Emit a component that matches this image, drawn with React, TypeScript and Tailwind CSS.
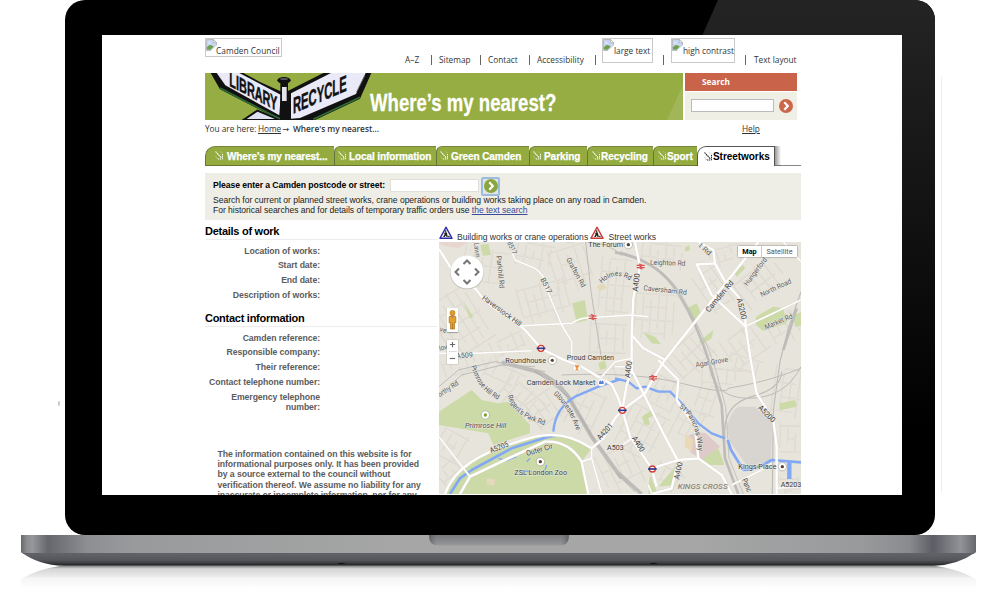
import React from "react";

function BrokenImage() {
  return (
    <svg viewBox="0 0 12 13" className="h-[12px] w-[11px] shrink-0">
      <path d="M.5.5h7.5l3.5 3.5v3.5L6 12.5H.5z" fill="#c9d6f2" stroke="#a9acb3" strokeWidth=".8" />
      <path d="M8 .5V4h3.5z" fill="#fff" stroke="#9a9ea8" strokeWidth=".7" />
      <path d="M2 4.5q1.5-2 3 0z" fill="#fff" />
      <path d="M1 11.5V9q3-3.500 5.500-2l2 1L5 11.800z" fill="#6d9f4d" />
      <path d="M12 6.500 5 13h7z" fill="#fff" />
    </svg>
  );
}

function AltImage({ label, className, textClass }: { label: string; className: string; textClass: string }) {
  return (
    <div className={`flex shrink-0 border border-[#c9c9c9] bg-white ${className}`}>
      <BrokenImage />
      <span className={textClass}>{label}</span>
    </div>
  );
}

function Divider({ className }: { className: string }) {
  return <span className={`mt-[17px] h-[10px] w-px shrink-0 bg-[#666] ${className}`} />;
}

function Header() {
  const item = "mt-[16px] shrink-0 leading-[12px]";
  return (
    <div className="flex h-[37.500px] shrink-0 whitespace-nowrap pt-[3px] font-['Open_Sans','Noto_Sans',sans-serif] text-[8.300px] text-[#333]">
      <AltImage label="Camden Council" className="h-[19px] w-[77px]" textClass="-ml-px mt-[6px] leading-[12px] tracking-[0.050px]" />
      <span className={`ml-[123px] w-[26px] ${item}`}>A–Z</span>
      <Divider className="" />
      <span className={`ml-[7px] w-[41px] ${item}`}>Sitemap</span>
      <Divider className="" />
      <span className={`ml-[7px] w-[41px] ${item}`}>Contact</span>
      <Divider className="" />
      <span className={`ml-[7px] w-[58px] tracking-[0.050px] ${item}`}>Accessibility</span>
      <Divider className="" />
      <AltImage label="large text" className="ml-[6px] h-[25px] w-[51px]" textClass="mt-[6px] leading-[12px]" />
      <Divider className="ml-[10px]" />
      <AltImage label="high contrast" className="ml-[7px] h-[25px] w-[64px]" textClass="mt-[6px] leading-[12px]" />
      <Divider className="ml-[10px]" />
      <span className={`ml-[8px] ${item}`}>Text layout</span>
    </div>
  );
}

function Signpost() {
  return (
    <svg viewBox="15 113 510 141" className="h-[47px] w-[170px] shrink-0">
      <path d="M130 254 172 226 240 254z" fill="#dfe0f2" stroke="#111" strokeWidth="6" />
      <path d="M32 113 60 162 240 254 268 254 268 180 180 140 130 113z" fill="#111" />
      <path d="M60 158 210 236 240 250" stroke="#2f6b37" strokeWidth="5" fill="none" />
      <path d="M50 113 76 150 238 240 242 178 118 113z" fill="#e9e9f8" />
      <path d="M258 254 262 168 370 113 514 113 480 190 345 254z" fill="#111" />
      <path d="M480 186 340 252" stroke="#2f6b37" strokeWidth="5" fill="none" />
      <path d="M273 174 393 113 497 113 468 176 300 248 273 250z" fill="#e9e9f8" />
      <path d="M470 170 494 122" stroke="#555" strokeWidth="3" />
      <rect x="241" y="135" width="23" height="119" fill="#111" />
      <rect x="246" y="155" width="14" height="42" fill="#e4e4ee" />
      <ellipse cx="252" cy="135" rx="20" ry="10" fill="#111" />
      <ellipse cx="252" cy="131" rx="12" ry="3" fill="#555" />
      <g fontFamily="Liberation Sans, Arial, sans-serif" fontWeight="700" fill="#111" stroke="#111" strokeWidth="1.500">
        <text transform="matrix(1 .53 0 1 88 151)" fontSize="61" textLength="144" lengthAdjust="spacingAndGlyphs">LIBRARY</text>
        <text transform="matrix(1 -.43 0 1 279 235)" fontSize="68" textLength="161" lengthAdjust="spacingAndGlyphs">RECYCLE</text>
      </g>
    </svg>
  );
}

function Chevron({ fill }: { fill: string }) {
  return (
    <svg viewBox="0 0 14 14" className="h-[14px] w-[14px] shrink-0">
      <circle cx="7" cy="7" r="7" fill={fill} />
      <path d="M5.300 3.300 8.800 7l-3.500 3.700" fill="none" stroke="#fff" strokeWidth="2.200" />
    </svg>
  );
}

function Banner() {
  return (
    <div className="flex h-[47px] w-[592px] shrink-0">
      <div className="relative flex w-[478px] shrink-0 overflow-hidden bg-[#95ad42]">
        <Signpost />
        <span className="ml-[-5.500px] mt-[15px] origin-left scale-x-[0.808] whitespace-nowrap font-['Liberation_Sans',Arial,sans-serif] text-[23px] font-bold leading-[30px] text-white [-webkit-text-stroke:0.300px_white]">
          Where’s my nearest?
        </span>
        <svg viewBox="0 0 16 47" className="absolute right-0 top-0 h-[47px] w-[16px]">
          <path d="M16 12V47H0z" fill="#a1b658" />
        </svg>
      </div>
      <div className="ml-[2px] flex flex-1 flex-col font-['Open_Sans','Noto_Sans',sans-serif]">
        <div className="h-[18px] bg-[#c9634a] pl-[17px] text-[8.300px] font-bold leading-[17px] text-white">Search</div>
        <div className="mt-px flex flex-1 items-center bg-[#f0efe6] pl-[6px]">
          <div className="h-[13px] w-[83px] border border-[#bbb] bg-white" />
          <span className="ml-[5px] flex"><Chevron fill="#cb674a" /></span>
        </div>
      </div>
    </div>
  );
}

function Breadcrumb() {
  return (
    <div className="flex h-[26px] shrink-0 whitespace-nowrap pt-[3px] font-['Open_Sans','Noto_Sans',sans-serif] text-[8.300px] leading-[12px] text-[#333]">
      <span className="w-[53px] tracking-[-0.030px]">You are here:</span>
      <span className="w-[23px] tracking-[-0.100px] underline">Home</span>
      <span className="ml-[1px] w-[11px] font-['DejaVu_Sans',sans-serif]">→</span>
      <span className="w-[449px] font-semibold tracking-[-0.020px]">Where's my nearest...</span>
      <span className="underline">Help</span>
    </div>
  );
}

function TabArrow({ color }: { color: string }) {
  return (
    <svg viewBox="0 0 9 9" className="h-[9px] w-[9px] shrink-0">
      <path d="M.5.5 6.500 7" fill="none" stroke={color} strokeWidth="1.100" strokeDasharray="1.600 .6" />
      <path d="M7.500 3v5H3" fill="none" stroke={color} strokeWidth="1" strokeDasharray="1.400 .7" />
      <path d="M5.500 .8 7.500 2M.8 5.500 2.500 8" stroke={color} strokeWidth=".5" strokeDasharray="1 1" />
    </svg>
  );
}

const tabs = [
  { label: "Where's my nearest...", cls: "w-[129px] pl-[9px] rounded-tl-[10px]", text: "ml-[3px] tracking-[-0.100px]" },
  { label: "Local information", cls: "w-[102px] pl-[3px] rounded-tl-[6px]", text: "ml-[2px] tracking-[-0.100px]" },
  { label: "Green Camden", cls: "w-[93px] pl-[3px] rounded-tl-[6px]", text: "ml-[2px] tracking-[-0.080px]" },
  { label: "Parking", cls: "w-[58px] pl-[3px] rounded-tl-[6px]", text: "ml-[2px] tracking-[-0.050px]" },
  { label: "Recycling", cls: "w-[66px] pl-[4px] rounded-tl-[6px]", text: "tracking-[-0.050px]" },
  { label: "Sport", cls: "w-[44px] pl-[4px] rounded-tl-[6px]", text: "tracking-[-0.100px]" },
];

function Tabs() {
  return (
    <div className="flex h-[20px] w-[596px] shrink-0 whitespace-nowrap font-['Liberation_Sans',Arial,sans-serif] text-[10px] font-bold leading-[20px]">
      {tabs.map((t) => (
        <div key={t.label} className={`flex shrink-0 items-center border-b border-l border-t border-b-[#68742f] border-l-[#65743a] border-t-[#76863e] bg-[#94ac3f] text-white [-webkit-text-stroke:0.250px_white] ${t.cls}`}>
          <TabArrow color="#fff" />
          <span className={`mt-[3px] ${t.text}`}>{t.label}</span>
        </div>
      ))}
      <div className="flex w-[78px] shrink-0 items-center rounded-tl-[9px] border-l border-r border-t border-[#555] bg-white pl-[6px] text-black">
        <TabArrow color="#222" />
        <span className="mt-[2px] tracking-[-0.050px]">Streetworks</span>
      </div>
      <div className="w-[6px] border-b border-[#777] bg-linear-to-r from-[#999] to-white" />
      <div className="flex-1 border-b border-[#888]" />
    </div>
  );
}

function SearchPanel() {
  return (
    <div className="mt-[7px] flex h-[47px] w-[596px] shrink-0 flex-col whitespace-nowrap bg-[#efeee6] pl-[8px] pt-[3px] text-[8.600px] leading-[10.500px] tracking-[-0.045px] text-[#222]">
      <div className="flex h-[19px] items-center">
        <span className="mt-px w-[177px] text-[8.700px] font-bold tracking-[-0.100px] text-black">Please enter a Camden postcode or street:</span>
        <span className="h-[13px] w-[89px] border border-[#e0dfd9] bg-white" />
        <span className="ml-[2px] mt-[2px] flex h-[19px] w-[19px] items-center justify-center rounded-[2px] border-2 border-[#9cbbe0] bg-[#dfe6e2]"><Chevron fill="#8ca63f" /></span>
      </div>
      <div>Search for current or planned street works, crane operations or building works taking place on any road in Camden.</div>
      <div>For historical searches and for details of temporary traffic orders use <span className="text-[#3b4a9b] underline">the text search</span></div>
    </div>
  );
}

function Details() {
  const row = "h-[14.800px] text-[8.700px] leading-[14.800px]";
  const head = "border-b border-[#ececec] text-[11px] font-bold leading-[15px] tracking-[-0.270px] text-black";
  return (
    <div className="w-[232px] shrink-0 whitespace-nowrap font-bold tracking-[-0.080px] text-[#5c5c5c]">
      <div className={`h-[16px] ${head}`}>Details of work</div>
      <div className="w-[115px] pt-[4px] text-right">
        {["Location of works:", "Start date:", "End date:", "Description of works:"].map((l) => <div key={l} className={row}>{l}</div>)}
      </div>
      <div className={`mt-[8px] h-[16px] ${head}`}>Contact information</div>
      <div className="flex w-[115px] flex-col items-end pt-[4px]">
        {["Camden reference:", "Responsible company:", "Their reference:", "Contact telephone number:"].map((l) => <div key={l} className={row}>{l}</div>)}
        <div className="pt-[2px] text-right text-[8.700px] leading-[10.400px]">Emergency telephone<br />number:</div>
      </div>
      <div className="ml-[12.500px] mt-[36px] text-[8.700px] leading-[10.350px]">
        The information contained on this website is for<br />
        informational purposes only. It has been provided<br />
        by a source external to the council without<br />
        verification thereof. We assume no liability for any<br />
        inaccurate or incomplete information, nor for any
      </div>
    </div>
  );
}

function WorksSign({ color }: { color: string }) {
  return (
    <svg viewBox="0 0 42 40" className="h-[13.500px] w-[14px] shrink-0">
      <path d="M21 3.500 39 36.500H3z" fill="#fff" stroke={color} strokeWidth="4.500" strokeLinejoin="round" />
      <circle cx="20" cy="15" r="2.500" fill="#111" />
      <path d="M17 19 22 18 25 24 24 28 27 33H23L20 28 17 33H12L16 26z" fill="#222" />
      <path d="M15 21 27 29" stroke="#222" strokeWidth="1.500" />
      <path d="M26 33 29.500 28 33 33z" fill="#222" />
    </svg>
  );
}

const grids: [number, number, number, number, number, number][] = [
  [75, 290, 140, 190, -32, 26], [150, 130, 130, 120, 8, 27], [330, 230, 150, 120, -15, 24],
  [300, 90, 110, 80, 10, 25], [410, 130, 110, 140, -18, 27], [540, 190, 90, 190, 5, 23],
  [520, 340, 110, 100, 3, 25], [680, 90, 120, 80, 6, 24], [660, 270, 120, 140, 4, 23],
  [840, 190, 80, 130, -35, 22], [770, 390, 130, 110, -42, 24], [930, 360, 120, 100, -35, 26],
  [980, 170, 150, 100, -38, 28], [1050, 310, 90, 90, -28, 27], [870, 90, 90, 60, -15, 22],
  [230, 360, 120, 70, -25, 24], [90, 420, 130, 60, -20, 24], [255, 530, 130, 100, 40, 25],
  [330, 550, 90, 100, -35, 24], [450, 560, 90, 140, 25, 28], [680, 500, 100, 100, 28, 25],
  [760, 600, 80, 110, 27, 24], [620, 620, 120, 150, 27, 27], [560, 730, 120, 130, -25, 27],
  [700, 760, 90, 70, 30, 24], [860, 460, 120, 70, 5, 25], [930, 420, 100, 60, 15, 22],
  [1060, 500, 90, 150, 8, 25], [1070, 640, 70, 90, 3, 23], [820, 530, 70, 110, 20, 25],
  [50, 660, 80, 90, 30, 24], [50, 740, 80, 70, -40, 22], [1060, 780, 60, 50, 0, 20],
  [210, 450, 120, 60, 25, 25], [520, 450, 90, 50, -15, 22],
];

function StreetGrids() {
  const shapes = grids.map(([cx, cy, w, h, a, s], i) => {
    let d = "";
    for (let x = -w / 2, n = 0; x <= w / 2; x += s, n++) d += `M${x} ${-h / 2 + (n % 3) * 14}V${h / 2 - ((n + i) % 3) * 15}`;
    for (let y = -h / 2 + 8, n = 0; y <= h / 2; y += s * 1.7, n++) d += `M${-w / 2 + ((n + i) % 2) * s} ${y}H${w / 2 - (n % 2) * s}`;
    return <path key={i} d={d} transform={`translate(${cx} ${cy}) rotate(${a})`} />;
  });
  return (
    <g fill="none">
      <g stroke="#d4d0c7" strokeWidth="3.200">{shapes}</g>
      <g stroke="#eeebe5" strokeWidth="1.200">{shapes}</g>
    </g>
  );
}

const roads = [
  "M12 72 45 125 125 195Q150 235 200 265T270 315L320 372 385 404 440 425 490 455 530 478 550 520 562 555",
  "M600 51 615 125 595 220 590 330 625 370 690 404",
  "M590 330V435L575 480 562 555",
  "M970 51 690 404 655 460 630 505 562 555 540 580 505 640 470 670",
  "M790 51 835 75 840 115 870 170 910 215 930 260 932 305 947 404 965 505 1015 585 1025 665V807",
  "M840 115 785 118 830 210 932 305",
  "M590 435 640 535 690 635 730 710",
  "M670 405 730 465 725 525 780 605 790 700",
  "M562 555 585 635 650 730 665 785",
  "M650 730 730 705 790 700 860 750 890 807",
  "M650 807 710 790 730 705",
  "M30 807Q50 750 110 710T300 635Q390 615 470 670",
  "M75 807 105 755 220 700 330 650Q400 645 440 710L460 807",
];
const midRoads = [
  "M220 51 240 105 300 130Q330 150 330 180L380 300 410 350V404",
  "M250 303 410 295Q430 280 460 278L590 270 640 275",
  "M12 385 120 385 290 377",
  "M12 635 105 755",
  "M440 710 470 700 470 670M470 700 500 807",
  "M540 675 590 640",
  "M890 780 980 735 1010 715",
  "M1045 51 1098 110",
  "M500 455 540 410 590 400",
  "M540 425 595 425M650 805 640 780",
  "M930 305 1098 225",
  "M1025 790 1098 785",
];

type Lbl = { t: string; x: number; y: number; r?: number; w: number; s?: number };
const labels: Lbl[] = [
  { t: "Lawn", x: 117, y: 54, r: 84, w: 44 },
  { t: "Parkhill Rd", x: 184, y: 93, r: 84, w: 98 },
  { t: "B517", x: 216, y: 53, r: 65, w: 40 },
  { t: "B517", x: 316, y: 163, r: 63, w: 50 },
  { t: "Grafton Rd", x: 393, y: 103, r: 61, w: 98 },
  { t: "Leighton Rd", x: 645, y: 119, r: 2, w: 106 },
  { t: "Caversham Rd", x: 625, y: 196, r: 6, w: 130 },
  { t: "t Rd", x: 790, y: 64, r: 42, w: 42 },
  { t: "A400", x: 608, y: 200, r: -83, w: 54, s: 23 },
  { t: "Camden Rd", x: 822, y: 263, r: -50, w: 116, s: 23 },
  { t: "Hungerford", x: 937, y: 184, r: -53, w: 100 },
  { t: "North Road", x: 980, y: 216, r: -25, w: 100 },
  { t: "A5200", x: 905, y: 222, r: 76, w: 64, s: 23 },
  { t: "Market Rd", x: 992, y: 314, r: -23, w: 90 },
  { t: "A509", x: 64, y: 400, r: -4, w: 50 },
  { t: "ve", x: 13, y: 319, r: 15, w: 20 },
  { t: "low", x: 14, y: 378, r: -15, w: 30 },
  { t: "The Forum", x: 460, y: 66, w: 104, s: 21 },
  { t: "Roundhouse", x: 211, y: 413, w: 122, s: 23 },
  { t: "Proud Camden", x: 395, y: 406, w: 142, s: 23 },
  { t: "Camden Lock Market", x: 275, y: 480, w: 206, s: 23 },
  { t: "orthy Rd", x: 14, y: 517, r: -34, w: 70 },
  { t: "A5205", x: 168, y: 685, r: -22, w: 58, s: 23 },
  { t: "Outer Cir", x: 276, y: 693, r: -16, w: 82, s: 23 },
  { t: "ZSL London Zoo", x: 238, y: 750, w: 158, s: 23 },
  { t: "A4201", x: 496, y: 646, r: -48, w: 58, s: 23 },
  { t: "A503", x: 516, y: 674, w: 50, s: 23 },
  { t: "A400", x: 584, y: 459, r: -82, w: 50, s: 23 },
  { t: "A400", x: 590, y: 640, r: 57, w: 50, s: 23 },
  { t: "A400", x: 732, y: 764, r: -78, w: 52, s: 23 },
  { t: "Agar Grove", x: 783, y: 427, r: -10, w: 98 },
  { t: "A5200", x: 968, y: 550, r: 45, w: 62, s: 23 },
  { t: "Kings Place", x: 910, y: 733, w: 114, s: 23 },
  { t: "A5203", x: 1037, y: 785, w: 62, s: 23 },
  { t: "Panc", x: 920, y: 764, r: 66, w: 42, s: 23 },
];
const curved = [
  { id: "haverstock", d: "M140 222Q195 262 262 312", t: "Haverstock Hill", w: 140 },
  { id: "primrose", d: "M108 424Q130 500 198 528", t: "Primrose Hill Rd", w: 132 },
  { id: "regents", d: "M218 512Q235 575 328 600", t: "Regent's Park Rd", w: 148 },
  { id: "gloucester", d: "M355 508Q400 545 426 622", t: "Gloucester Ave", w: 130 },
  { id: "pancras", d: "M732 548Q785 580 791 690", t: "St Pancras Way", w: 148 },
  { id: "holmes", d: "M500 176Q545 132 592 172", t: "Holmes Rd", w: 94 },
];

function Dot({ x, y, c }: { x: number; y: number; c: string }) {
  return (
    <g>
      <circle cx={x} cy={y} r="12.500" fill="#fff" stroke="#a5a19a" strokeWidth="2" />
      <circle cx={x} cy={y} r="5" fill={c} />
    </g>
  );
}

function MapCanvas() {
  return (
    <svg viewBox="12 51 1086 756" className="absolute inset-0 h-full w-full" fontFamily="Roboto, sans-serif">
      <rect x="12" y="51" width="1086" height="756" fill="#e7e4dc" />
      <StreetGrids />
      <path d="M12 51H100L70 68Q35 68 12 55z" fill="#e9d5cf" />
      <g fill="#cbdaa7">
        <path d="M12 560 110 495 140 525 190 535 222 530 285 600V625L175 660 160 625 12 600z" />
        <path d="M30 807Q50 750 110 710T300 635Q390 615 470 670L440 710 460 807z" />
        <path d="M412 235 450 225 458 285 425 293z" />
        <path d="M136 60 160 56 168 90 144 92zM85 230 115 275 105 280z" />
        <path d="M750 68 762 60 765 75 750 80zM755 250 785 235 800 270 775 293zM624 322 660 335 678 358 650 355zM792 350 835 315 830 340 800 358z" />
        <path d="M963 275 1015 245 1045 250 1055 295 985 318 963 300zM1075 270 1098 262V302L1080 305zM895 140 925 120 930 130 905 155z" />
        <path d="M620 575 650 555 660 570 640 580 645 600 630 600zM800 700 850 670 868 720 820 720zM1035 535 1080 525 1085 545 1035 555z" />
        <path d="M645 750 670 810H640zM670 785 725 720 715 780zM490 415 510 405 515 430 495 435z" />
      </g>
      <path d="M755 635 785 620 812 625 855 665 800 705 765 680z" fill="#decac8" />
      <path d="M750 625 775 645 770 680 750 665z" fill="#ead9b7" />
      <path d="M485 185 505 175 515 188 495 198z" fill="#e3d9b7" />
      <path d="M155 760 180 763 178 782 155 778z" fill="#e5d9bc" />
      <path d="M875 610Q885 560 910 545H960L1012 595 1008 705 940 727 885 650z" fill="#d8d5d0" />
      <g fill="none" stroke="#bdbcb9">
        <path d="M540 82Q670 105 730 205T820 404L860 540 870 700 910 807" strokeWidth="8" />
        <path d="M555 80Q685 115 742 215T835 410L872 545 882 700 925 807" strokeWidth="2.500" />
        <path d="M200 412 300 438Q360 460 400 515L470 635 560 760" strokeWidth="12" />
        <path d="M12 510 80 450 200 420 300 425M12 485 70 435 180 410 330 440" strokeWidth="3" />
        <path d="M452 51 468 200 500 404 M395 51Q510 40 560 92" strokeWidth="3" />
        <path d="M380 450Q600 440 740 475T880 490Q1000 470 1098 430M820 404Q830 520 940 520T1098 425" strokeWidth="3" />
        <path d="M1098 200 1060 310 1035 410 1015 555 1012 807M870 640Q860 540 950 515T1040 440" strokeWidth="3.500" />
        <path d="M1085 250 1045 375" strokeWidth="8" />
        <path d="M545 740 620 807" strokeWidth="11" />
      </g>
      <path d="M545 745 600 800M300 438 400 515 480 650" fill="none" stroke="#a5a4a2" strokeWidth="2" />
      <g fill="none" stroke="#81a8f4" strokeWidth="7" strokeLinejoin="round">
        <path d="M540 460 580 470 605 490 630 485 670 500 705 500 740 535 790 595 830 625 870 640" />
        <path d="M878 645 888 675 925 735" strokeWidth="8" />
        <path d="M925 735Q960 735 1010 705L1098 712" strokeWidth="8" />
        <path d="M1063 712V762" strokeWidth="13" />
        <path d="M555 463 490 485 420 515Q360 550 355 620" />
        <path d="M365 632 340 635 230 670 110 735 75 760 45 807" strokeWidth="8" />
        <path d="M190 700 215 707 245 695M275 710 285 700M265 738 290 740M335 720 330 735" strokeWidth="4" />
      </g>
      <g fill="none" strokeLinejoin="round">
        <path d={midRoads.join("")} stroke="#dad6cd" strokeWidth="6" />
        <path d={roads.join("")} stroke="#dad6cd" strokeWidth="9" />
        <path d={midRoads.join("")} stroke="#fff" strokeWidth="4.500" />
        <path d={roads.join("")} stroke="#fff" strokeWidth="7" />
      </g>
      <g fill="#4a4a4a" stroke="#eceae4" strokeWidth="3" paintOrder="stroke" strokeLinejoin="round">
        {labels.map((l, i) => (
          <text key={i} transform={`translate(${l.x} ${l.y}) rotate(${l.r || 0})`} fontSize={l.s || 21.500} textLength={l.w} lengthAdjust="spacingAndGlyphs" fill={l.s ? "#3c3c3c" : "#5c5c5c"}>{l.t}</text>
        ))}
        {curved.map((c) => (
          <g key={c.id}>
            <path id={c.id} d={c.d} fill="none" stroke="none" />
            <text fontSize="21.500" fill="#505050"><textPath href={`#${c.id}`} textLength={c.w} lengthAdjust="spacingAndGlyphs">{c.t}</textPath></text>
          </g>
        ))}
        <text x="90" y="608" fontSize="22.500" fontStyle="italic" textLength="124" lengthAdjust="spacingAndGlyphs">Primrose Hill</text>
        <text x="728" y="793" fontSize="21" fontStyle="italic" fontWeight="500" fill="#8b8571" textLength="150" lengthAdjust="spacingAndGlyphs">KINGS CROSS</text>
      </g>
      <Dot x={580} y={59} c="#4a4038" />
      <Dot x={352} y={406} c="#62422d" />
      <Dot x={151} y={570} c="#81a22d" />
      <Dot x={316} y={710} c="#62422d" />
      <Dot x={1042} y={725} c="#62422d" />
      <circle cx="426" cy="429" r="12" fill="#fff" stroke="#b5b1aa" />
      <path d="M420 422H432L427 429V435H431H421H425V429z" fill="#e88636" stroke="#e88636" strokeWidth="2" />
      <circle cx="499" cy="472" r="12" fill="#fff" stroke="#b5b1aa" />
      <path d="M492 477V470L496 466 499 470 502 466 506 470V477z" fill="#5d7fd4" />
      {[[318, 370], [562, 556], [652, 732]].map(([x, y]) => (
        <g key={x}>
          <circle cx={x} cy={y} r="9" fill="#fff" stroke="#d23a34" strokeWidth="4" />
          <rect x={x - 13} y={y - 2.500} width="26" height="5" fill="#25398d" />
        </g>
      ))}
      {[[473, 276], [617, 124], [654, 458]].map(([x, y]) => (
        <path key={x} d={`M${x - 12} ${y - 3}h24M${x - 12} ${y + 4}h24M${x - 5} ${y - 8}l10 5-10 7 10 5`} fill="none" stroke="#dc5151" strokeWidth="3.500" />
      ))}
    </svg>
  );
}

function MapView() {
  return (
    <div className="relative h-[252px] w-[362px] shrink-0 overflow-hidden">
      <MapCanvas />
      <svg viewBox="0 0 36 36" className="absolute left-[10px] top-[12px] h-[36px] w-[36px]">
        <circle cx="18" cy="18.500" r="16.800" fill="#b9b6b0" />
        <circle cx="18" cy="18" r="16.500" fill="#fff" />
        <path d="M14.500 10 18 6.500 21.500 10M14.500 26 18 29.500 21.500 26M10 14.500 6.500 18 10 21.500M26 14.500 29.500 18 26 21.500" fill="none" stroke="#757575" strokeWidth="2" />
      </svg>
      <div className="absolute left-[8px] top-[66px] flex h-[24px] w-[11px] items-center justify-center rounded-[1px] bg-white shadow-[0_1px_1px_#999]">
        <svg viewBox="0 0 26 60" className="h-[20px] w-[9px]">
          <circle cx="13" cy="9" r="8" fill="#dc9c2a" stroke="#a76b13" />
          <path d="M3 20Q13 13 23 20V38H19V57H7V38H3z" fill="#e1a22d" stroke="#a76b13" strokeWidth="2" />
          <path d="M8 17 13 25 18 17z" fill="#b47d72" />
          <path d="M13 38V57" stroke="#a76b13" strokeWidth="2" />
        </svg>
      </div>
      <div className="absolute left-[8px] top-[98px] flex h-[24px] w-[11px] flex-col items-center justify-around bg-white text-[#666] shadow-[0_0_1px_#777]">
        <svg viewBox="0 0 8 8" className="h-[7px] w-[7px]"><path d="M1 4h6M4 1v6" stroke="currentColor" strokeWidth="1.300" /></svg>
        <span className="h-px w-[8px] bg-[#ddd]" />
        <svg viewBox="0 0 8 8" className="h-[7px] w-[7px]"><path d="M1 4h6" stroke="currentColor" strokeWidth="1.300" /></svg>
      </div>
      <div className="absolute left-[299px] top-[4px] flex h-[11px] bg-white font-[Roboto,sans-serif] text-[7.300px] leading-[11px] shadow-[0_0_1.500px_#555]">
        <span className="w-[24px] border-r border-[#ccc] text-center font-bold text-black">Map</span>
        <span className="w-[35px] text-center text-[#555]">Satellite</span>
      </div>
    </div>
  );
}

function Screen() {
  return (
    <div className="relative mt-[35px] flex h-[459.500px] w-[800px] shrink-0 flex-col overflow-hidden bg-white pl-[103px] font-['Liberation_Sans',Arial,sans-serif]">
      <Header />
      <Banner />
      <Breadcrumb />
      <Tabs />
      <SearchPanel />
      <div className="flex pt-[4px]">
        <Details />
        <div className="ml-[2px] flex w-[362px] flex-col">
          <div className="flex h-[18px] shrink-0 whitespace-nowrap pt-[2px] text-[8.600px] leading-[10px] tracking-[-0.020px] text-[#333]">
            <WorksSign color="#2b2ca8" />
            <span className="ml-[4px] mt-[6px] w-[133px]">Building works or crane operations</span>
            <WorksSign color="#c93b32" />
            <span className="ml-[4.500px] mt-[6px]">Street works</span>
          </div>
          <MapView />
        </div>
      </div>
    </div>
  );
}

function LaptopBase() {
  return (
    <svg viewBox="0 0 1000 62" className="h-[62px] w-[1000px] shrink-0">
      <defs>
        <linearGradient id="deck" gradientUnits="userSpaceOnUse" x1="21" x2="976" y1="0" y2="0">
          <stop offset="0" stopColor="#67686c" /><stop offset=".006" stopColor="#8c8d90" />
          <stop offset=".012" stopColor="#96979a" /><stop offset=".028" stopColor="#66676d" />
          <stop offset=".04" stopColor="#717277" /><stop offset=".07" stopColor="#8e8f92" />
          <stop offset=".12" stopColor="#999a9c" /><stop offset=".4" stopColor="#a5a6a5" />
          <stop offset=".7" stopColor="#a5a6a5" /><stop offset=".88" stopColor="#999a9c" />
          <stop offset=".93" stopColor="#8a8b8e" /><stop offset=".955" stopColor="#5d5e65" />
          <stop offset=".984" stopColor="#929397" /><stop offset="1" stopColor="#66676c" />
        </linearGradient>
        <linearGradient id="under" x1="0" x2="0" y1="0" y2="1">
          <stop offset="0" stopColor="#66676b" /><stop offset=".6" stopColor="#54555a" />
          <stop offset=".85" stopColor="#36373a" /><stop offset="1" stopColor="#171719" />
        </linearGradient>
        <linearGradient id="notch" x1="0" x2="0" y1="0" y2="1">
          <stop offset="0" stopColor="#77787b" /><stop offset="1" stopColor="#97989a" />
        </linearGradient>
        <linearGradient id="notchEdge" x1="0" x2="1" y1="0" y2="0">
          <stop offset="0" stopColor="#55565b" stopOpacity=".8" /><stop offset=".06" stopColor="#777" stopOpacity="0" />
          <stop offset=".94" stopColor="#777" stopOpacity="0" /><stop offset="1" stopColor="#55565b" stopOpacity=".8" />
        </linearGradient>
        <linearGradient id="shade" x1="0" x2="0" y1="0" y2="1">
          <stop offset="0" stopColor="#888" /><stop offset=".12" stopColor="#d5d5d5" />
          <stop offset=".45" stopColor="#eaeaea" /><stop offset=".52" stopColor="#f5f5f5" /><stop offset="1" stopColor="#fff" />
        </linearGradient>
      </defs>
      <path d="M60 31Q38 34 21 44V54H976V44Q958 34 936 31z" fill="url(#shade)" />
      <path d="M21 17Q38 30 64 30.800H934Q958 30 976 17z" fill="url(#under)" />
      <path d="M21 0H976V17L974 18.500H23L21 17z" fill="url(#deck)" />
      <path d="M23 18.500H974" stroke="#606166" strokeWidth="1" />
      <path d="M429 0H569Q569 10.500 560 10.500H438Q429 10.500 429 0z" fill="url(#notch)" />
      <path d="M429 0H569Q569 10.500 560 10.500H438Q429 10.500 429 0z" fill="url(#notchEdge)" />
      <path d="M337 29q4-2 9 0zM649 29q4-2 9 0z" fill="#0a0a0b" />
    </svg>
  );
}

export default function App() {
  return (
    <div className="relative flex h-[597px] w-[1000px] flex-col overflow-hidden bg-white">
      <div className="relative ml-[65px] flex h-[535px] w-[870px] shrink-0 flex-col overflow-hidden rounded-[20px] bg-black pl-[37px]">
        <svg viewBox="0 0 870 535" className="absolute inset-0 h-full w-full">
          <defs>
            <linearGradient id="gloss" x1="0" x2="0" y1="0" y2="1">
              <stop offset="0" stopColor="#242424" /><stop offset="1" stopColor="#000" />
            </linearGradient>
          </defs>
          <path d="M653 0H870V430H462z" fill="url(#gloss)" />
        </svg>
        <Screen />
      </div>
      <LaptopBase />
      <span className="absolute left-[941px] top-[77px] h-[416px] w-px bg-[#eee]" />
      <span className="absolute left-[58px] top-[401px] h-[5px] w-[2px] rounded-full bg-[#ccc]" />
    </div>
  );
}
